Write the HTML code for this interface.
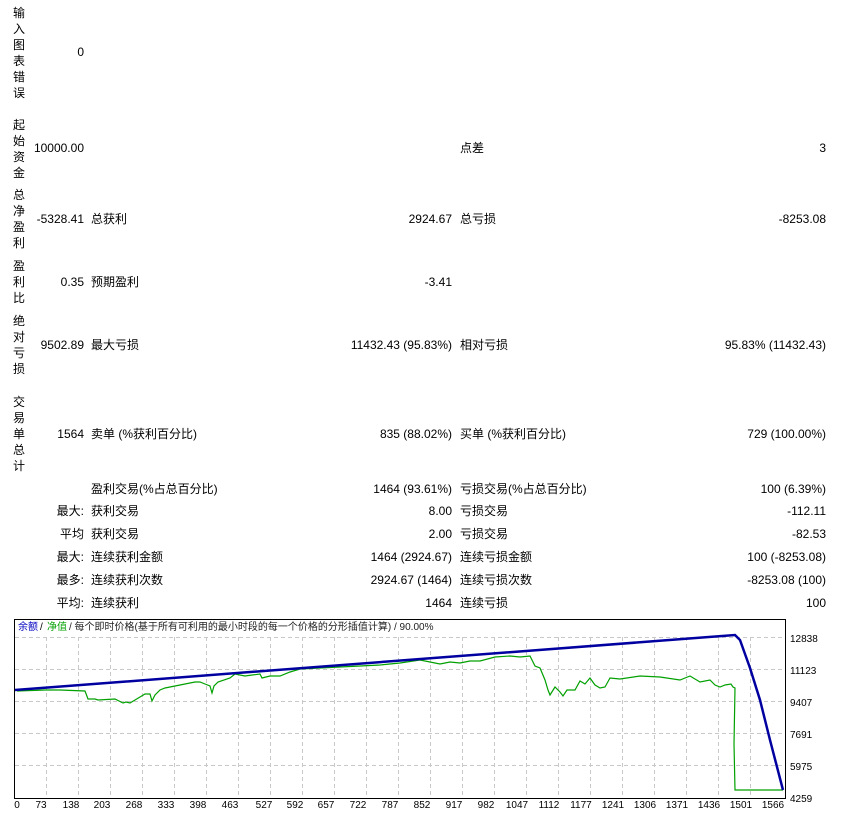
<!DOCTYPE html>
<html><head><meta charset="utf-8"><style>
body{margin:0;width:841px;height:815px;background:#fff;position:relative;overflow:hidden;font-family:"Liberation Sans","Noto Sans CJK SC",sans-serif;font-size:12px;color:#000}
.a{position:absolute;white-space:nowrap;line-height:14px}
.v{position:absolute;left:12px;width:14px;line-height:16px;text-align:center;font-size:12px}
.r{text-align:right}
</style></head><body>
<div class="v" style="top:5px">输<br>入<br>图<br>表<br>错<br>误</div>
<div class="a r" style="right:757px;top:45px">0</div>
<div class="v" style="top:117px">起<br>始<br>资<br>金</div>
<div class="a r" style="right:757px;top:141px">10000.00</div>
<div class="a" style="left:460px;top:141px">点差</div>
<div class="a r" style="right:15px;top:141px">3</div>
<div class="v" style="top:187px">总<br>净<br>盈<br>利</div>
<div class="a r" style="right:757px;top:212px">-5328.41</div>
<div class="a" style="left:91px;top:212px">总获利</div>
<div class="a r" style="right:389px;top:212px">2924.67</div>
<div class="a" style="left:460px;top:212px">总亏损</div>
<div class="a r" style="right:15px;top:212px">-8253.08</div>
<div class="v" style="top:258px">盈<br>利<br>比</div>
<div class="a r" style="right:757px;top:275px">0.35</div>
<div class="a" style="left:91px;top:275px">预期盈利</div>
<div class="a r" style="right:389px;top:275px">-3.41</div>
<div class="v" style="top:313px">绝<br>对<br>亏<br>损</div>
<div class="a r" style="right:757px;top:338px">9502.89</div>
<div class="a" style="left:91px;top:338px">最大亏损</div>
<div class="a r" style="right:389px;top:338px">11432.43 (95.83%)</div>
<div class="a" style="left:460px;top:338px">相对亏损</div>
<div class="a r" style="right:15px;top:338px">95.83% (11432.43)</div>
<div class="v" style="top:394px">交<br>易<br>单<br>总<br>计</div>
<div class="a r" style="right:757px;top:427px">1564</div>
<div class="a" style="left:91px;top:427px">卖单 (%获利百分比)</div>
<div class="a r" style="right:389px;top:427px">835 (88.02%)</div>
<div class="a" style="left:460px;top:427px">买单 (%获利百分比)</div>
<div class="a r" style="right:15px;top:427px">729 (100.00%)</div>

<div class="a" style="left:91px;top:482px">盈利交易(%占总百分比)</div>
<div class="a r" style="right:389px;top:482px">1464 (93.61%)</div>
<div class="a" style="left:460px;top:482px">亏损交易(%占总百分比)</div>
<div class="a r" style="right:15px;top:482px">100 (6.39%)</div>

<div class="a r" style="right:757px;top:504px">最大:</div>
<div class="a" style="left:91px;top:504px">获利交易</div>
<div class="a r" style="right:389px;top:504px">8.00</div>
<div class="a" style="left:460px;top:504px">亏损交易</div>
<div class="a r" style="right:15px;top:504px">-112.11</div>

<div class="a r" style="right:757px;top:527px">平均</div>
<div class="a" style="left:91px;top:527px">获利交易</div>
<div class="a r" style="right:389px;top:527px">2.00</div>
<div class="a" style="left:460px;top:527px">亏损交易</div>
<div class="a r" style="right:15px;top:527px">-82.53</div>

<div class="a r" style="right:757px;top:550px">最大:</div>
<div class="a" style="left:91px;top:550px">连续获利金额</div>
<div class="a r" style="right:389px;top:550px">1464 (2924.67)</div>
<div class="a" style="left:460px;top:550px">连续亏损金额</div>
<div class="a r" style="right:15px;top:550px">100 (-8253.08)</div>

<div class="a r" style="right:757px;top:573px">最多:</div>
<div class="a" style="left:91px;top:573px">连续获利次数</div>
<div class="a r" style="right:389px;top:573px">2924.67 (1464)</div>
<div class="a" style="left:460px;top:573px">连续亏损次数</div>
<div class="a r" style="right:15px;top:573px">-8253.08 (100)</div>

<div class="a r" style="right:757px;top:596px">平均:</div>
<div class="a" style="left:91px;top:596px">连续获利</div>
<div class="a r" style="right:389px;top:596px">1464</div>
<div class="a" style="left:460px;top:596px">连续亏损</div>
<div class="a r" style="right:15px;top:596px">100</div>

<svg style="position:absolute;left:0;top:0" width="841" height="815" font-family="Liberation Sans, Noto Sans CJK SC, sans-serif">
<g stroke="#c8c8c8" stroke-width="1" stroke-dasharray="4,3">
<line x1="15" y1="637.5" x2="785" y2="637.5"/><line x1="15" y1="669.5" x2="785" y2="669.5"/><line x1="15" y1="701.5" x2="785" y2="701.5"/><line x1="15" y1="733.5" x2="785" y2="733.5"/><line x1="15" y1="765.5" x2="785" y2="765.5"/>
<line x1="46.5" y1="637" x2="46.5" y2="798"/><line x1="78.5" y1="637" x2="78.5" y2="798"/><line x1="110.5" y1="637" x2="110.5" y2="798"/><line x1="142.5" y1="637" x2="142.5" y2="798"/><line x1="174.5" y1="637" x2="174.5" y2="798"/><line x1="206.5" y1="637" x2="206.5" y2="798"/><line x1="238.5" y1="637" x2="238.5" y2="798"/><line x1="270.5" y1="637" x2="270.5" y2="798"/><line x1="302.5" y1="637" x2="302.5" y2="798"/><line x1="334.5" y1="637" x2="334.5" y2="798"/><line x1="366.5" y1="637" x2="366.5" y2="798"/><line x1="398.5" y1="637" x2="398.5" y2="798"/><line x1="430.5" y1="637" x2="430.5" y2="798"/><line x1="462.5" y1="637" x2="462.5" y2="798"/><line x1="494.5" y1="637" x2="494.5" y2="798"/><line x1="526.5" y1="637" x2="526.5" y2="798"/><line x1="558.5" y1="637" x2="558.5" y2="798"/><line x1="590.5" y1="637" x2="590.5" y2="798"/><line x1="622.5" y1="637" x2="622.5" y2="798"/><line x1="654.5" y1="637" x2="654.5" y2="798"/><line x1="686.5" y1="637" x2="686.5" y2="798"/><line x1="718.5" y1="637" x2="718.5" y2="798"/><line x1="750.5" y1="637" x2="750.5" y2="798"/>
</g>
<rect x="14.5" y="619.5" width="771" height="179" fill="none" stroke="#000" stroke-width="1"/>
<polyline fill="none" stroke="#00a000" stroke-width="1.2" points="17,691 45,690 60,690 85,691 88,699 95,699 98,700 115,699 123,703 126,702 130,703 135,700 140,697 145,694 150,694 152,701 155,695 160,690 165,688 175,686 185,684 195,682 200,682 205,684 210,686 212,693 214,686 218,682 230,678 235,674 245,676 260,674 262,678 270,676 280,676 290,672 300,669 320,668 340,667 380,665 400,663 420,660 430,662 440,664 450,662 460,663 470,661 480,661 495,657 510,656 520,657 530,656 535,666 540,668 545,680 548,690 550,695 555,687 560,692 563,696 567,690 575,690 580,681 585,684 590,678 595,685 600,688 605,687 610,678 620,679 640,676 660,677 680,680 690,676 700,682 710,680 715,685 720,687 725,685 731,684 733,687 735,688 734,744 735,790 783,790"/>
<polyline fill="none" stroke="#0000a0" stroke-width="2.5" points="15,690 735,635 740,640 750,668 760,700 770,740 783,790"/>
<g font-size="10"><text x="18" y="630" fill="#0000c0">余额</text><text x="40" y="630">/</text><text x="47" y="630" fill="#00a000">净值</text><text x="69" y="630" fill="#222">/ 每个即时价格(基于所有可利用的最小时段的每一个价格的分形插值计算) / 90.00%</text></g>
<g font-size="10" fill="#000">
<text x="790" y="642">12838</text><text x="790" y="674">11123</text><text x="790" y="706">9407</text><text x="790" y="738">7691</text><text x="790" y="770">5975</text><text x="790" y="802">4259</text>
</g>
<g font-size="10" text-anchor="middle">
<text x="17" y="808">0</text><text x="41" y="808">73</text><text x="71" y="808">138</text><text x="102" y="808">203</text><text x="134" y="808">268</text><text x="166" y="808">333</text><text x="198" y="808">398</text><text x="230" y="808">463</text><text x="264" y="808">527</text><text x="295" y="808">592</text><text x="326" y="808">657</text><text x="358" y="808">722</text><text x="390" y="808">787</text><text x="422" y="808">852</text><text x="454" y="808">917</text><text x="486" y="808">982</text><text x="517" y="808">1047</text><text x="549" y="808">1112</text><text x="581" y="808">1177</text><text x="613" y="808">1241</text><text x="645" y="808">1306</text><text x="677" y="808">1371</text><text x="709" y="808">1436</text><text x="741" y="808">1501</text><text x="773" y="808">1566</text>
</g>
</svg>
</body></html>
